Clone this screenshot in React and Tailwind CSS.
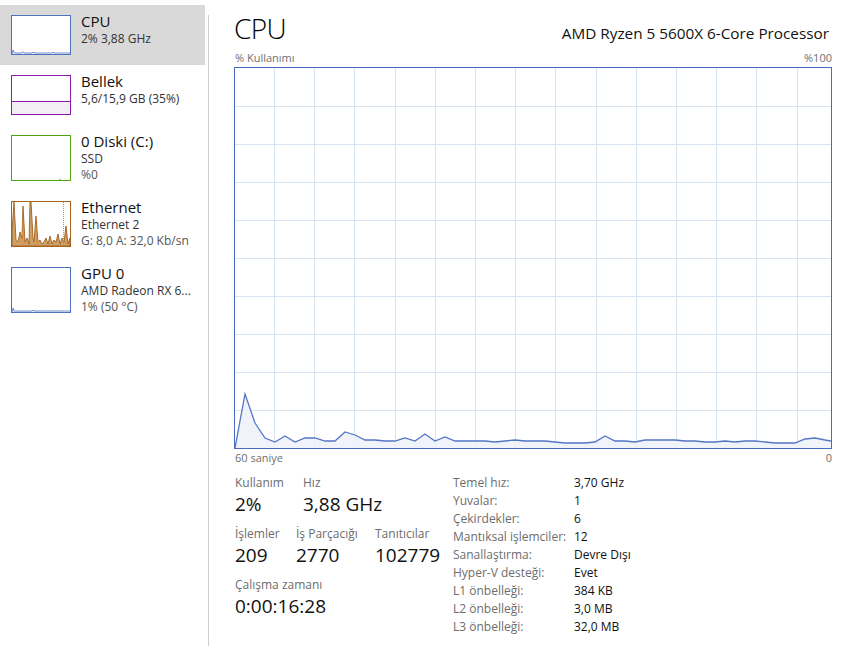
import React from 'react';

const cpuSamples = [
  448, 394, 423, 438, 442, 436, 442, 438, 438, 441, 441, 432, 435, 440, 440, 441, 441, 438, 441, 434,
  441, 437, 441, 441, 441, 441, 442, 441, 440, 441, 441, 441, 442, 443, 443, 443, 442, 436, 441, 441,
  442, 440, 440, 440, 440, 441, 441, 442, 442, 441, 442, 441, 441, 442, 443, 443, 443, 439, 438, 440,
];

const GRAPH_W = 596;
const GRAPH_H = 380;

const CpuGraph = () => {
  const pts = cpuSamples.map((y, i) => [Math.min(i * 10, GRAPH_W), y - 68]);
  pts.push([GRAPH_W, 441 - 68]);
  const line = pts.map(([x, y]) => `${x},${y}`).join(' ');
  const area = `0,${GRAPH_H} ${line} ${GRAPH_W},${GRAPH_H}`;
  const hLines = Array.from({ length: 9 }, (_, i) => (i + 1) * 38);
  const vLines = Array.from({ length: 14 }, (_, i) => 39 + i * 40.2);

  return (
    <div className="w-[598px] h-[382px] border border-[#4a6cbd] mt-[2px]">
      <svg width={GRAPH_W} height={GRAPH_H} className="block">
        {hLines.map((y) => (
          <line key={`h${y}`} x1="0" x2={GRAPH_W} y1={y + 0.5} y2={y + 0.5} stroke="#d9e4f2" strokeWidth="1" />
        ))}
        {vLines.map((x) => (
          <line key={`v${x}`} y1="0" y2={GRAPH_H} x1={Math.round(x) + 0.5} x2={Math.round(x) + 0.5} stroke="#d9e4f2" strokeWidth="1" />
        ))}
        <polygon points={area} fill="#eef1fa" fillOpacity="0.85" />
        <polyline points={line} fill="none" stroke="#5376c4" strokeWidth="1.3" />
      </svg>
    </div>
  );
};

const Thumb = ({ h, color, children }) => (
  <div className={`w-[60px] ${h} border shrink-0 bg-white`} style={{ borderColor: color }}>
    {children}
  </div>
);

const CpuThumb = () => (
  <Thumb h="h-[40px]" color="#4f71c0">
    <svg viewBox="0 0 58 38" className="w-full h-full block">
      <polyline
        points="0,38 1,34 2,36 3,37 5,37 7,37 9,37 11,36 13,37 15,37 20,37 21,36 22,37 30,37 40,37 41,36 42,37 58,37"
        fill="#e9edf8"
        stroke="#4f71c0"
        strokeWidth="0.8"
      />
    </svg>
  </Thumb>
);

const MemThumb = () => (
  <Thumb h="h-[40px]" color="#8b1aae">
    <div className="h-full flex flex-col justify-end">
      <div className="h-[13px] bg-[#f2eef4] border-t border-[#8b1aae]" />
    </div>
  </Thumb>
);

const DiskThumb = () => (
  <Thumb h="h-[46px]" color="#4da60c">
    <svg viewBox="0 0 58 44" className="w-full h-full block">
      <line x1="48" x2="48" y1="43" y2="44" stroke="#4da60c" strokeWidth="1" />
    </svg>
  </Thumb>
);

const EthThumb = () => (
  <Thumb h="h-[46px]" color="#a7621c">
    <svg viewBox="0 0 58 44" preserveAspectRatio="none" className="w-full h-full block">
      <polygon
        points="0,44 0,30 2,0 4,38 6,40 8,30 10,36 11,4 13,40 15,36 17,42 18,0 19,0 21,36 22,40 24,14 26,40 28,38 30,42 32,40 34,36 36,42 38,34 40,42 42,38 44,40 46,32 48,42 50,36 52,40 54,24 56,42 58,36 58,44"
        fill="#caa068"
        stroke="#a0601e"
        strokeWidth="0.9"
      />
      <line x1="51.5" x2="51.5" y1="0" y2="44" stroke="#e08a3c" strokeWidth="1" strokeDasharray="1 1" />
      <line x1="10.5" x2="10.5" y1="20" y2="44" stroke="#e08a3c" strokeWidth="1" strokeDasharray="1 1" />
      <line x1="24.5" x2="24.5" y1="26" y2="44" stroke="#e08a3c" strokeWidth="1" strokeDasharray="1 1" />
    </svg>
  </Thumb>
);

const GpuThumb = () => (
  <Thumb h="h-[46px]" color="#4f71c0">
    <svg viewBox="0 0 58 44" className="w-full h-full block">
      <polyline
        points="0,44 1,40 2,43 4,43 20,43 21,42 22,43 58,43"
        fill="#e9edf8"
        stroke="#4f71c0"
        strokeWidth="0.8"
      />
    </svg>
  </Thumb>
);

const SideItem = ({ thumb, title, lines, active }) => (
  <div className={`w-[205px] flex pl-[11px] py-[10px] ${active ? 'bg-[#d9d9d9]' : ''}`}>
    {thumb}
    <div className="ml-[10px] -mt-[4px] -mb-[4px] flex flex-col">
      <span className="text-[15px] leading-[20px] text-[#111]">{title}</span>
      {lines.map((l, i) => (
        <span key={i} className={`text-[12px] leading-[16px] whitespace-nowrap ${i === 0 ? 'text-[#333]' : 'text-[#555]'}`}>
          {l}
        </span>
      ))}
    </div>
  </div>
);

const Stat = ({ label, value, w }) => (
  <div className={`flex flex-col ${w}`}>
    <span className="text-[12px] leading-[16px] text-[#6d6d6d] whitespace-nowrap">{label}</span>
    <span className="text-[19px] leading-[26px] text-[#111] whitespace-nowrap">{value}</span>
  </div>
);

const specs = [
  ['Temel hız:', '3,70 GHz'],
  ['Yuvalar:', '1'],
  ['Çekirdekler:', '6'],
  ['Mantıksal işlemciler:', '12'],
  ['Sanallaştırma:', 'Devre Dışı'],
  ['Hyper-V desteği:', 'Evet'],
  ['L1 önbelleği:', '384 KB'],
  ['L2 önbelleği:', '3,0 MB'],
  ['L3 önbelleği:', '32,0 MB'],
];

const App = () => {
  return (
    <div className="w-[853px] h-[646px] flex bg-white overflow-hidden font-['Open_Sans','Noto_Sans',sans-serif]">
      <aside className="w-[208px] pt-[5px] flex flex-col shrink-0">
        <SideItem active thumb={<CpuThumb />} title="CPU" lines={['2% 3,88 GHz']} />
        <SideItem thumb={<MemThumb />} title="Bellek" lines={['5,6/15,9 GB (35%)']} />
        <SideItem thumb={<DiskThumb />} title="0 Diski (C:)" lines={['SSD', '%0']} />
        <SideItem thumb={<EthThumb />} title="Ethernet" lines={['Ethernet 2', 'G: 8,0 A: 32,0 Kb/sn']} />
        <SideItem thumb={<GpuThumb />} title="GPU 0" lines={['AMD Radeon RX 6...', '1% (50 °C)']} />
      </aside>
      <div className="w-px bg-[#cfcfcf] mt-[15px] shrink-0" />
      <main className="flex-1 pl-[25px] pr-[20px] pt-[10px] flex flex-col">
        <div className="flex items-baseline justify-between w-[598px]">
          <h1 className="text-[28px] leading-[36px] font-light text-black tracking-[-0.6px]">CPU</h1>
          <span className="text-[15.3px] leading-[20px] text-[#111] pr-[3px]">AMD Ryzen 5 5600X 6-Core Processor</span>
        </div>
        <div className="mt-[4px] flex justify-between w-[598px] text-[11px] leading-[15px] text-[#707070]">
          <span className="pl-px">% Kullanımı</span>
          <span>%100</span>
        </div>
        <CpuGraph />
        <div className="mt-[1px] flex justify-between w-[598px] text-[11px] leading-[15px] text-[#707070]">
          <span className="pl-px">60 saniye</span>
          <span>0</span>
        </div>
        <div className="mt-[10px] flex pl-px">
          <div className="w-[218px] flex flex-col">
            <div className="flex">
              <Stat label="Kullanım" value="2%" w="w-[68px]" />
              <Stat label="Hız" value="3,88 GHz" w="w-[100px]" />
            </div>
            <div className="flex mt-[9px]">
              <Stat label="İşlemler" value="209" w="w-[61px]" />
              <Stat label="İş Parçacığı" value="2770" w="w-[79px]" />
              <Stat label="Tanıtıcılar" value="102779" w="w-[70px]" />
            </div>
            <div className="flex mt-[9px]">
              <Stat label="Çalışma zamanı" value="0:00:16:28" w="w-[150px]" />
            </div>
          </div>
          <div className="flex flex-col -mt-px">
            {specs.map(([k, v]) => (
              <div key={k} className="flex text-[12px] leading-[18px]">
                <span className="w-[121px] text-[#6d6d6d] whitespace-nowrap">{k}</span>
                <span className="text-[#111] whitespace-nowrap">{v}</span>
              </div>
            ))}
          </div>
        </div>
      </main>
    </div>
  );
};

export default App;
